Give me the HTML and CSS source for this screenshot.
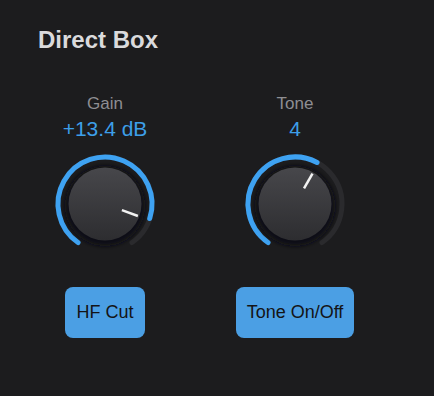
FILE: index.html
```html
<!DOCTYPE html>
<html>
<head>
  <title>Direct Box</title>
  <link rel="stylesheet" href="styles.css">
</head>
<body>
  <div class="panel">
    <h1 class="title">Direct Box</h1>
    <div class="controls">
      <div class="control">
        <div class="label">Gain</div>
        <div class="value">+13.4 dB</div>
        <svg class="knob" width="110" height="110" viewBox="0 0 110 110">
          <defs>
            <linearGradient id="cap" x1="0" y1="0" x2="0" y2="1">
              <stop offset="0" stop-color="#47474b"/>
              <stop offset="1" stop-color="#2d2d30"/>
            </linearGradient>
            <filter id="soft" x="-30%" y="-30%" width="160%" height="160%">
              <feGaussianBlur stdDeviation="2"/>
            </filter>
          </defs>
          <path class="track" d="M 28.04 93.5 A 47 47 0 1 1 81.96 93.5"/>
          <path class="fill" d="M 28.04 93.5 A 47 47 0 1 1 99.70 69.52"/>
          <circle class="shade" cx="55" cy="57" r="40" filter="url(#soft)"/>
          <circle cx="55" cy="55" r="36.5" fill="url(#cap)"/>
          <line class="pointer" x1="71.91" y1="61.16" x2="87.89" y2="66.97"/>
        </svg>
        <button class="toggle">HF Cut</button>
      </div>
      <div class="control">
        <div class="label">Tone</div>
        <div class="value">4</div>
        <svg class="knob" width="110" height="110" viewBox="0 0 110 110">
          <defs>
            <linearGradient id="cap2" x1="0" y1="0" x2="0" y2="1">
              <stop offset="0" stop-color="#47474b"/>
              <stop offset="1" stop-color="#2d2d30"/>
            </linearGradient>
            <filter id="soft2" x="-30%" y="-30%" width="160%" height="160%">
              <feGaussianBlur stdDeviation="2"/>
            </filter>
          </defs>
          <path class="track" d="M 28.04 93.5 A 47 47 0 1 1 81.96 93.5"/>
          <path class="fill" d="M 28.04 93.5 A 47 47 0 0 1 77.07 13.50"/>
          <circle class="shade" cx="55" cy="57" r="40" filter="url(#soft2)"/>
          <circle cx="55" cy="55" r="36.5" fill="url(#cap2)"/>
          <line class="pointer" x1="64" y1="39.41" x2="72.5" y2="24.69"/>
        </svg>
        <button class="toggle">Tone On/Off</button>
      </div>
    </div>
  </div>
</body>
</html>
```

FILE: styles.css
```css
body {
  margin: 0;
  background-color: #1c1c1e;
  font-family: "Liberation Sans", Arial, sans-serif;
}

.panel {
  padding-top: 26px;
}

.title {
  margin: 0;
  padding-left: 38px;
  font-size: 24px;
  line-height: 28px;
  font-weight: bold;
  color: #dadadc;
}

.controls {
  display: grid;
  grid-template-columns: 190px 190px;
  margin-top: 40px;
  padding-left: 10px;
}

.control {
  display: flex;
  flex-direction: column;
  align-items: center;
}

.label {
  font-size: 17px;
  line-height: 20px;
  color: #8e8e93;
}

.value {
  margin-top: 3px;
  font-size: 21px;
  line-height: 24px;
  color: #3d9fe9;
}

.knob {
  display: block;
  margin-top: 8px;
}

.track {
  fill: none;
  stroke: #2a2a2d;
  stroke-width: 5;
  stroke-linecap: round;
}

.fill {
  fill: none;
  stroke: #3ea2f2;
  stroke-width: 5;
  stroke-linecap: round;
}

.shade {
  fill: #111113;
}

.pointer {
  stroke: #f2f2f2;
  stroke-width: 2.5;
}

.toggle {
  margin-top: 28px;
  height: 51px;
  padding: 0 11px;
  border: none;
  border-radius: 8px;
  background-color: #4b9fe4;
  color: #141416;
  font-family: "Liberation Sans", Arial, sans-serif;
  font-size: 18px;
}
```
